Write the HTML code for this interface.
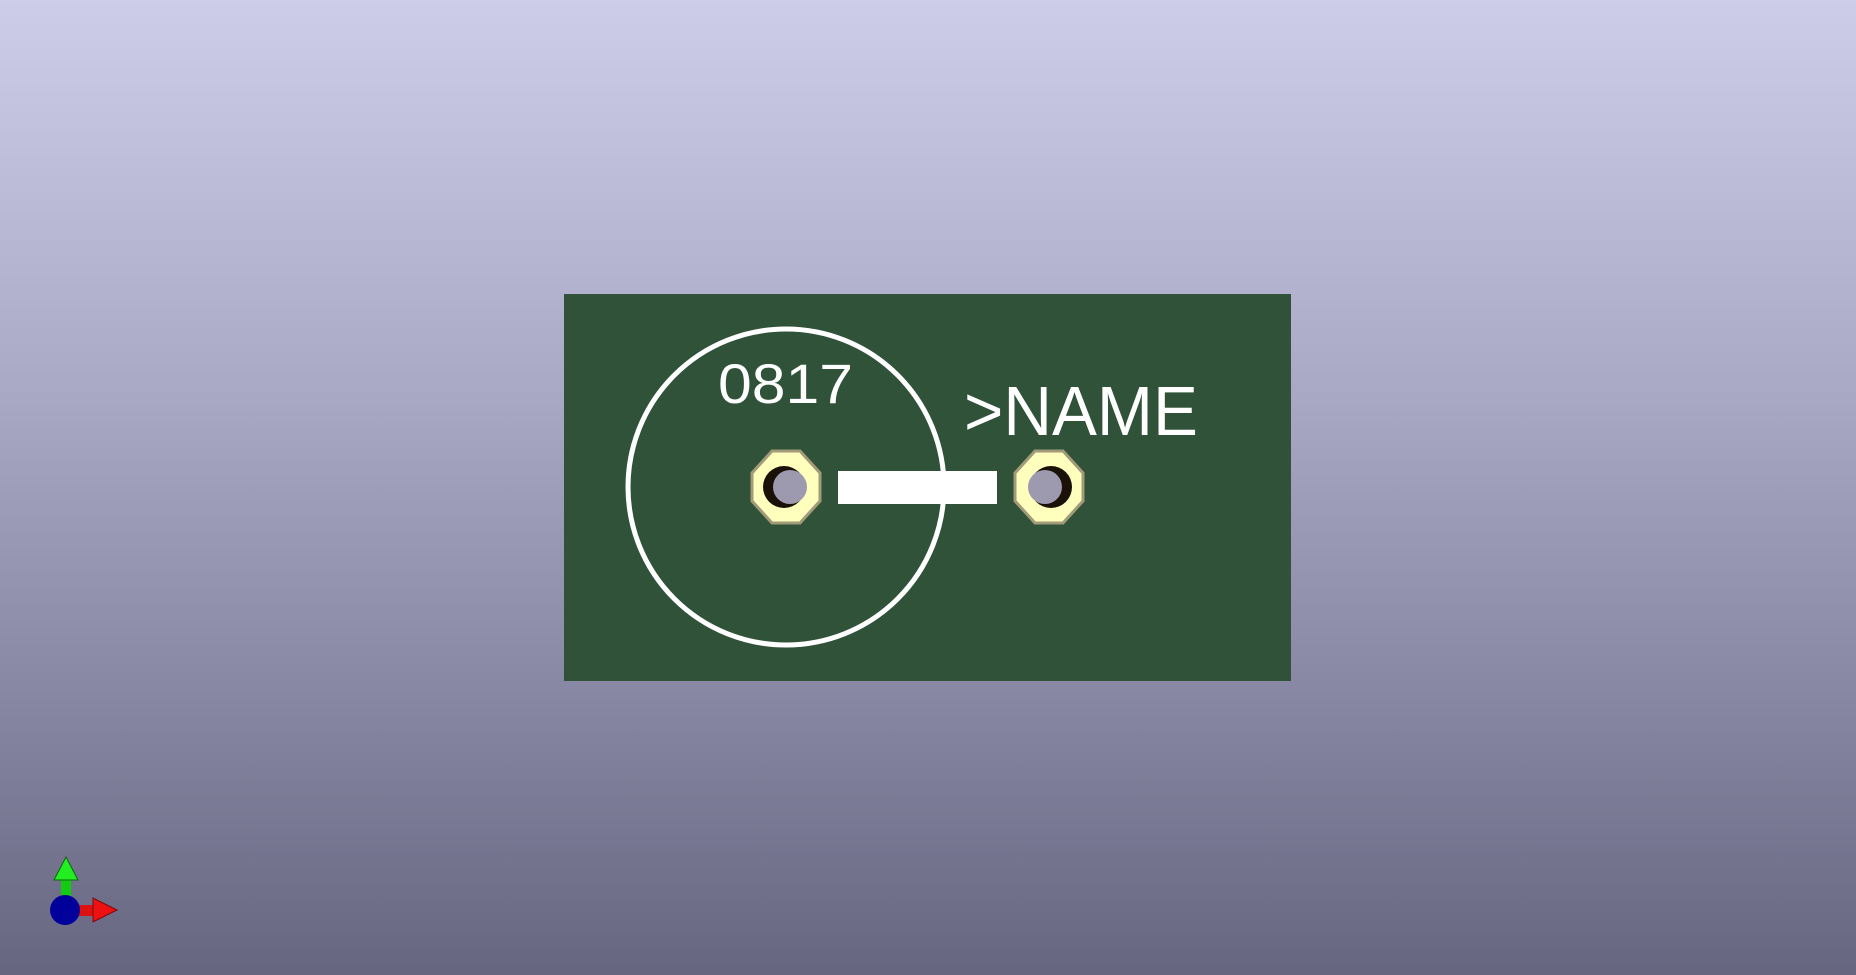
<!DOCTYPE html>
<html><head><meta charset="utf-8"><style>
html,body{margin:0;padding:0;width:1856px;height:975px;overflow:hidden;}
body{background:linear-gradient(to bottom,#cdcde9 0%,#a9a9c6 40%,#83839f 75%,#666681 100%);}
svg{position:absolute;left:0;top:0;}
</style></head><body>
<svg width="1856" height="975" viewBox="0 0 1856 975" xmlns="http://www.w3.org/2000/svg">
<rect x="564" y="294" width="727" height="387" fill="#2f5239"/>
<circle cx="786" cy="487" r="158" fill="none" stroke="#fff" stroke-width="5"/>
<rect x="838" y="471" width="159" height="33" fill="#fff"/>
<g>
<polygon points="772,451 800,451 820,473 820,501 800,523 772,523 752,501 752,473" fill="#ffffbd" stroke="#a29a78" stroke-width="3"/>
<circle cx="784" cy="487" r="21" fill="#1a1208"/>
<circle cx="790" cy="487" r="17" fill="#9d9ab0"/>
</g>
<g>
<polygon points="1035,451 1063,451 1083,473 1083,501 1063,523 1035,523 1015,501 1015,473" fill="#ffffbd" stroke="#a29a78" stroke-width="3"/>
<circle cx="1051" cy="487" r="21" fill="#1a1208"/>
<circle cx="1045" cy="487" r="17" fill="#9d9ab0"/>
</g>
<text x="718" y="403" font-family="Liberation Sans Narrow, Liberation Sans, sans-serif" font-size="56" fill="#fff" textLength="135" lengthAdjust="spacingAndGlyphs">0817</text>
<text x="964" y="435" font-family="Liberation Sans Narrow, Liberation Sans, sans-serif" font-size="70" fill="#fff" textLength="234" lengthAdjust="spacingAndGlyphs">&gt;NAME</text>
<rect x="61" y="878" width="10" height="22" fill="#11cc11"/>
<polygon points="66,857 54,880 78,880" fill="#22ee22" stroke="#0a6a0a" stroke-width="1"/>
<rect x="75" y="905" width="20" height="11" fill="#dd1111"/>
<polygon points="117,910 93,898 93,922" fill="#ee1111" stroke="#7a0a0a" stroke-width="1"/>
<circle cx="65" cy="910" r="15" fill="#00009a"/>
</svg>
</body></html>
